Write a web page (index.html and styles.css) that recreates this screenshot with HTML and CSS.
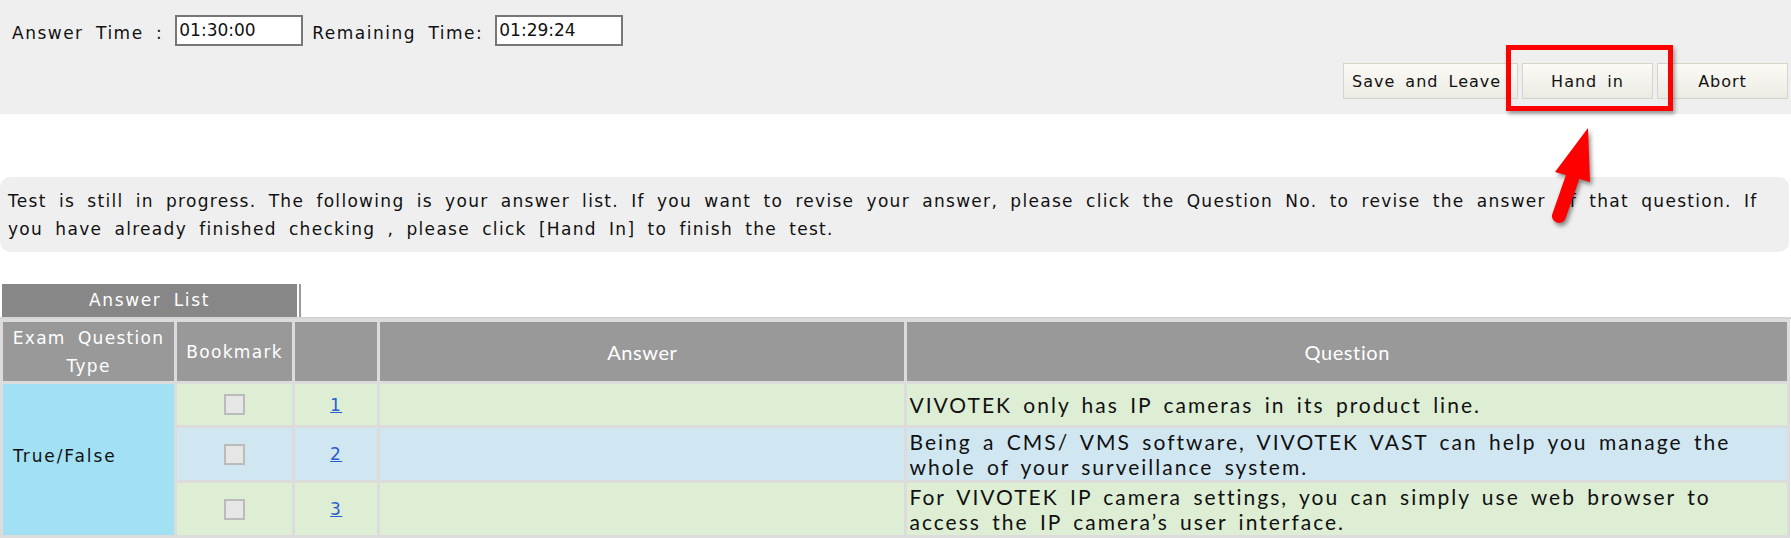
FILE: index.html
```html
<!DOCTYPE html>
<html lang="en">
<head>
<meta charset="utf-8">
<title>Answer List</title>
<link rel="stylesheet" href="styles.css">
</head>
<body>
<div class="topbar">
  <div class="timers">
    <span class="label">Answer Time :</span>
    <span class="timebox">01:30:00</span>
    <span class="label">Remaining Time:</span>
    <span class="timebox">01:29:24</span>
  </div>
  <div class="actions">
    <button class="btn btn-save">Save and Leave</button>
    <button class="btn">Hand in</button>
    <button class="btn">Abort</button>
  </div>
  <div class="highlight"></div>
  <svg class="arrow" width="70" height="120" viewBox="0 0 70 120">
    <polygon points="48,8 15,52 50,62" fill="#ff0000"/>
    <line x1="33" y1="56" x2="19" y2="96" stroke="#ff0000" stroke-width="14" stroke-linecap="round"/>
  </svg>
</div>

<div class="notice">Test is still in progress. The following is your answer list. If you want to revise your answer, please click the Question No. to revise the answer of that question. If you have already finished checking , please click [Hand In] to finish the test.</div>

<div class="tabs">
  <div class="tab">Answer List</div>
  <div class="tab-sep"></div>
</div>

<table class="answers">
  <colgroup>
    <col class="c-type">
    <col class="c-mark">
    <col class="c-no">
    <col class="c-ans">
    <col class="c-q">
  </colgroup>
  <thead>
    <tr>
      <th class="th-type">Exam Question<br>Type</th>
      <th>Bookmark</th>
      <th></th>
      <th class="th-cal">Answer</th>
      <th class="th-cal">Question</th>
    </tr>
  </thead>
  <tbody>
    <tr class="row-green">
      <td class="type" rowspan="3">True/False</td>
      <td class="mark"><span class="check"></span></td>
      <td class="no"><a href="#">1</a></td>
      <td></td>
      <td class="q">VIVOTEK only has IP cameras in its product line.</td>
    </tr>
    <tr class="row-blue">
      <td class="mark"><span class="check"></span></td>
      <td class="no"><a href="#">2</a></td>
      <td></td>
      <td class="q">Being a CMS/ VMS software, VIVOTEK VAST can help you manage the whole of your surveillance system.</td>
    </tr>
    <tr class="row-green">
      <td class="mark"><span class="check"></span></td>
      <td class="no"><a href="#">3</a></td>
      <td></td>
      <td class="q">For VIVOTEK IP camera settings, you can simply use web browser to access the IP camera’s user interface.</td>
    </tr>
  </tbody>
</table>
</body>
</html>
```

FILE: styles.css
```css
html, body {
  margin: 0;
  padding: 0;
  background: #ffffff;
}
body {
  font-family: "DejaVu Sans", Verdana, sans-serif;
  font-size: 17px;
  color: #111;
  letter-spacing: 1.3px;
  word-spacing: 5.5px;
}
.topbar {
  position: relative;
  background: #efefef;
  height: 114px;
  box-sizing: border-box;
  padding-top: 15px;
}
.timers {
  display: flex;
  align-items: center;
  padding-left: 12px;
  height: 31px;
}
.label {
  margin-right: 12px;
  padding-top: 4px;
  letter-spacing: 1.5px;
}
.timebox {
  box-sizing: border-box;
  width: 128px;
  height: 31px;
  border: 2px solid #777;
  background: #fff;
  padding: 0 2px;
  line-height: 27px;
  letter-spacing: 0;
  word-spacing: 0;
  font-size: 17px;
  margin-right: 9px;
}
.actions {
  display: flex;
  justify-content: flex-end;
  gap: 4px;
  margin-top: 17px;
  padding-right: 3px;
}
.btn {
  font-family: "DejaVu Sans", Verdana, sans-serif;
  font-size: 16px;
  letter-spacing: 1px;
  word-spacing: 4px;
  color: #111;
  width: 131px;
  height: 36px;
  padding: 0;
  border: 1px solid #d6d4c8;
  background: linear-gradient(#fbfaf6, #ecebe3);
}
.btn-save {
  width: 175px;
  text-align: left;
  padding-left: 8px;
}
.highlight {
  position: absolute;
  left: 1506px;
  top: 45px;
  width: 167px;
  height: 66px;
  box-sizing: border-box;
  border: 5px solid #ff0000;
  box-shadow: 2px 3px 4px rgba(0, 0, 0, 0.35);
}
.arrow {
  position: absolute;
  left: 1540px;
  top: 120px;
  z-index: 2;
  filter: drop-shadow(2px 3px 2px rgba(0, 0, 0, 0.45));
}
.notice {
  margin-top: 63px;
  margin-right: 2px;
  background: #efefef;
  border-radius: 10px;
  padding: 10px 8px 9px 8px;
  line-height: 28px;
  height: 56px;
}
.tabs {
  display: flex;
  margin-top: 32px;
  border-bottom: 2px solid #d4d4d4;
}
.tab {
  margin-left: 2px;
  width: 295px;
  height: 33px;
  line-height: 33px;
  background: #878787;
  color: #fff;
  text-align: center;
  letter-spacing: 1.6px;
}
.tab-sep {
  margin-left: 2px;
  width: 2px;
  background: #9a9a9a;
}
.answers {
  width: 1790px;
  border-collapse: separate;
  border-spacing: 3px;
  background: #dcdcdc;
  table-layout: fixed;
}
.c-type { width: 171px; }
.c-mark { width: 115px; }
.c-no { width: 82px; }
.c-ans { width: 524px; }
.c-q { width: 879px; }
th {
  background: #999999;
  color: #fff;
  font-weight: normal;
  height: 59px;
  padding: 0;
  line-height: 28px;
}
.th-cal {
  font-family: Lato, "Open Sans", sans-serif;
  font-size: 20px;
  letter-spacing: 0.6px;
}
td {
  padding: 0;
}
.row-green td {
  background: #ddeed4;
}
.row-blue td {
  background: #d0e7f1;
}
.row-green td.type,
.row-blue td.type,
td.type {
  background: #a2e0f3;
  padding: 0 0 8px 10px;
  vertical-align: middle;
  letter-spacing: 1.9px;
}
.mark {
  text-align: center;
}
.check {
  display: block;
  width: 17px;
  height: 17px;
  margin: 10px auto;
  border: 2px solid #bbbbbb;
  background: #e6e6e6;
}
.no {
  text-align: center;
}
.no a {
  color: #2a5ed0;
  text-decoration: underline;
}
.q {
  font-family: Lato, "Open Sans", sans-serif;
  font-size: 21px;
  letter-spacing: 2px;
  word-spacing: 4px;
  line-height: 25px;
  padding: 1px 2px;
  color: #111;
}
```
